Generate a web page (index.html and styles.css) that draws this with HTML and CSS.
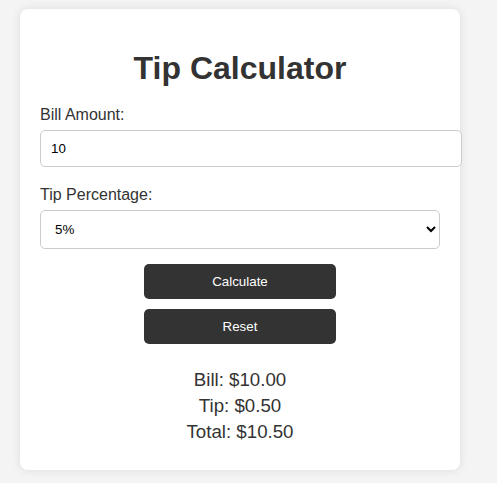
FILE: index.html
```html
<!DOCTYPE html>
<html lang="en">
<head>
<meta charset="UTF-8">
<title>Tip Calculator</title>
<link rel="stylesheet" href="styles.css">
</head>
<body>
<div class="container">
  <h1 class="title">Tip Calculator</h1>
  <label class="field-label" for="bill">Bill Amount:</label>
  <input class="text-input" id="bill" type="number" value="10">
  <label class="field-label" for="tip">Tip Percentage:</label>
  <select class="select-input" id="tip">
    <option value="5" selected>5%</option>
    <option value="10">10%</option>
    <option value="15">15%</option>
    <option value="20">20%</option>
  </select>
  <button class="btn btn-first" type="button">Calculate</button>
  <button class="btn" type="button">Reset</button>
  <div class="results">
    <p class="result-line">Bill: $10.00</p>
    <p class="result-line">Tip: $0.50</p>
    <p class="result-line">Total: $10.50</p>
  </div>
</div>
</body>
</html>
```

FILE: styles.css
```css
html, body {
  margin: 0;
}

body {
  padding: 9px 20px;
  background: #f4f4f4;
  font-family: "Liberation Sans", Arial, sans-serif;
  color: #333;
}

.container {
  width: 400px;
  padding: 20px 20px 25px;
  background: #fff;
  border-radius: 8px;
  box-shadow: 0 0 10px rgba(0, 0, 0, 0.1);
}

.title {
  font-size: 32px;
  font-weight: bold;
  text-align: center;
  margin: 21px 0 19px;
  color: #333;
}

.field-label {
  display: block;
  font-size: 16px;
  margin-bottom: 6px;
  color: #333;
}

.text-input {
  display: block;
  width: 400px;
  padding: 10px;
  border: 1px solid #ccc;
  border-radius: 5px;
  font-family: "Liberation Sans", Arial, sans-serif;
  font-size: 13.33px;
  margin: 0 0 19px;
  color: #000;
  -moz-appearance: textfield;
}

.text-input::-webkit-outer-spin-button,
.text-input::-webkit-inner-spin-button {
  -webkit-appearance: none;
  margin: 0;
}

.select-input {
  display: block;
  width: 400px;
  padding: 10px;
  border: 1px solid #ccc;
  border-radius: 5px;
  background: #fff;
  font-family: "Liberation Sans", Arial, sans-serif;
  font-size: 13.33px;
  margin: 0 0 15px;
  color: #000;
}

.btn {
  display: block;
  width: 192px;
  margin: 10px auto 0;
  padding: 10px;
  border: none;
  border-radius: 5px;
  background: #333;
  color: #fff;
  font-family: "Liberation Sans", Arial, sans-serif;
  font-size: 13.33px;
}

.btn-first {
  margin-top: 0;
}

.results {
  margin-top: 23px;
  text-align: center;
}

.result-line {
  margin: 0;
  font-size: 18.7px;
  line-height: 26px;
}
```
